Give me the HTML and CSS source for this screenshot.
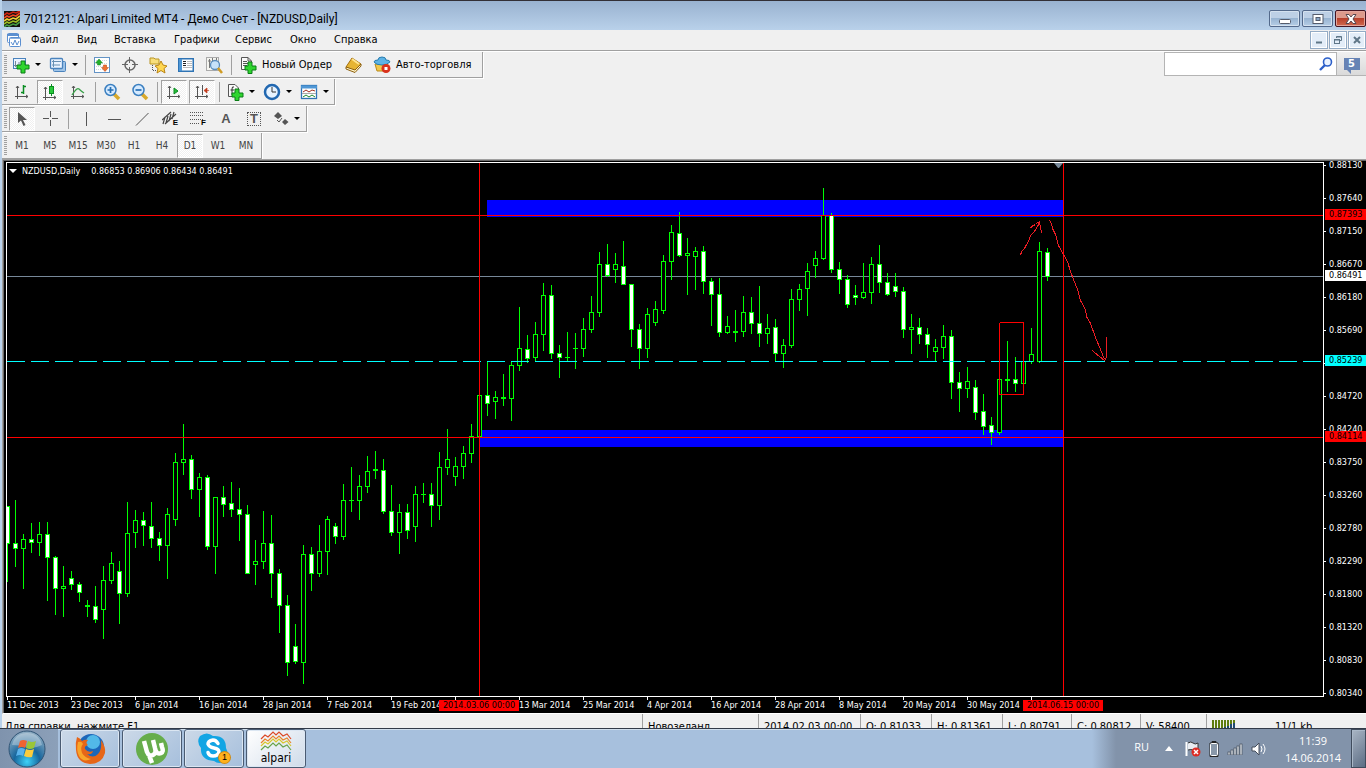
FILE: index.html
```
<!DOCTYPE html>
<html lang="ru">
<head>
<meta charset="utf-8">
<title>7012121: Alpari Limited MT4 - Демо Счет - [NZDUSD,Daily]</title>
<link rel="stylesheet" href="styles.css">
</head>
<body>
<main class="window">
  <header class="titlebar">
    <svg class="app-icon" width="16" height="16" viewBox="0 0 16 16"><rect width="16" height="16" fill="#111"/><g fill="none" stroke-width="1.6"><path d="M0 4L3 2L5 3L9 1L12 2L16 0" stroke="#c21"/><path d="M0 7L3 5L5 6L9 4L12 5L16 2" stroke="#e42"/><path d="M0 10L3 8L5 9L9 7L12 8L16 5" stroke="#ec3"/><path d="M0 13L3 11L5 12L9 10L12 11L16 8" stroke="#9b2"/><path d="M0 16L3 14L5 15L9 13L12 14L16 11" stroke="#494"/></g></svg>
    <h1 class="title">7012121: Alpari Limited MT4 - Демо Счет - [NZDUSD,Daily]</h1>
    <div class="win-buttons">
      <button class="win-btn" aria-label="Свернуть"><svg width="12" height="12" viewBox="0 0 12 12"><rect x=".5" y="6.500" width="11" height="4" rx="1" fill="#fff" stroke="#555c6c"/></svg></button>
      <button class="win-btn" aria-label="Развернуть"><svg width="12" height="12" viewBox="0 0 12 12"><rect x="1" y="1.500" width="10" height="9" fill="#fff" stroke="#555c6c"/><rect x="4" y="4.500" width="4" height="3" fill="#8aa7c8" stroke="#555c6c"/></svg></button>
      <button class="win-btn close" aria-label="Закрыть"><svg width="12" height="12" viewBox="0 0 12 12"><path d="M1 1.500H4L6 4L8 1.500H11L8 6L11 10.500H8L6 8L4 10.500H1L4 6Z" fill="#fff" stroke="#574850"/></svg></button>
    </div>
  </header>

  <nav class="menubar">
    <svg class="menu-icon" width="16" height="16" viewBox="0 0 16 16"><rect x="1.500" y="1.500" width="11" height="9" rx="1" fill="#fff" stroke="#5b8fd0"/><path d="M1 3H13" stroke="#5b8fd0" stroke-width="2"/><rect x="3.500" y="5.500" width="11" height="9" rx="1" fill="#fff" stroke="#5b8fd0"/><path d="M3 6.500H15" stroke="#8ab0e0"/><path d="M5 10L7 13L9 8L11 13L13 9" fill="none" stroke="#5b8fd0"/></svg>
    <button class="menu m1">Файл</button><button class="menu m2">Вид</button><button class="menu m3">Вставка</button><button class="menu m4">Графики</button><button class="menu m5">Сервис</button><button class="menu m6">Окно</button><button class="menu m7">Справка</button>
    <div class="mdi-buttons">
      <button class="mdi-btn" aria-label="Свернуть окно"><svg width="8" height="8" viewBox="0 0 8 8"><path d="M1 6.500H7" stroke="#5f7687" stroke-width="2"/></svg></button>
      <button class="mdi-btn" aria-label="Восстановить окно"><svg width="8" height="8" viewBox="0 0 8 8"><path d="M2.500 2V.5H7.500V4.500H6M2.500 1H7.500" fill="none" stroke="#5f7687"/><rect x=".5" y="3.500" width="5" height="4" fill="#e3edf8" stroke="#5f7687"/><path d="M0 4H6" stroke="#5f7687"/></svg></button>
      <button class="mdi-btn" aria-label="Закрыть окно"><svg width="8" height="8" viewBox="0 0 8 8"><path d="M1 1L7 7M7 1L1 7" stroke="#5f7687" stroke-width="2"/></svg></button>
    </div>
  </nav>

  <div class="toolbars">
    <div class="toolbar-row">
      <div class="toolbar" role="toolbar" aria-label="Стандартная">
        <span class="grip"></span>
        <button class="tool drop" aria-label="Новый график"><svg width="18" height="18" viewBox="0 0 18 18"><rect x="1.500" y="2.500" width="12" height="10" fill="#eaf3ff" stroke="#4a83bd"/><path d="M3.500 5V11M2 9.500H10M7 6V9" stroke="#789" fill="none"/><path d="M9 5H13V9H17V13H13V17H9V13H5V9H9Z" fill="#2fd52f" stroke="#0a7d16"/></svg></button>
        <button class="tool drop" aria-label="Профили"><svg width="18" height="18" viewBox="0 0 18 18"><rect x="4.500" y="5.500" width="12" height="10" rx="1" fill="#9fc4e8" stroke="#4a83bd"/><rect x="1.500" y="2.500" width="12" height="10" rx="1" fill="#eaf3ff" stroke="#4a83bd" stroke-width="1.300"/><path d="M4.500 4V11M3 5.500H12M11 9H3" stroke="#6790b4"/></svg></button>
        <span class="sep"></span>
        <button class="tool" aria-label="Обзор рынка"><svg width="16" height="16" viewBox="0 0 16 16"><rect x=".5" y=".5" width="15" height="15" fill="#fff" stroke="#6494c6"/><path d="M2 3.500H14M2 6.500H14M2 9.500H14M2 12.500H14" stroke="#ccd6e0" stroke-dasharray="1 1"/><path d="M5 2L8.500 6H6.500V8H3.500V6H1.500Z" fill="#22b02b" stroke="#118021" stroke-width=".5"/><path d="M11 14.500L14.500 10.500H12.500V8H9.500V10.500H7.500Z" fill="#f07030" stroke="#b04010" stroke-width=".5"/></svg></button>
        <button class="tool" aria-label="Окно данных"><svg width="16" height="16" viewBox="0 0 16 16"><circle cx="8" cy="8" r="5" fill="none" stroke="#666" stroke-width="1.500"/><path d="M7.500 0V6M7.500 10V16M0 7.500H6M10 7.500H16" stroke="#666"/></svg></button>
        <button class="tool" aria-label="Навигатор"><svg width="18" height="18" viewBox="0 0 18 18"><path d="M1 2H5L6 3H10V8H1Z" fill="#f8df7c" stroke="#b99524"/><path d="M3.500 9V14.500H8" fill="none" stroke="#555" stroke-dasharray="1 1"/><path d="M12 5L14 9L18 10L15 12.500L16 17L12 14.500L8 17L9 12.500L6 10L10 9Z" fill="#ffd751" stroke="#ba8413"/></svg></button>
        <button class="tool" aria-label="Терминал"><svg width="16" height="14" viewBox="0 0 16 14"><rect x=".75" y=".75" width="14.500" height="12.500" fill="#fff" stroke="#2f74b5" stroke-width="1.500"/><rect x="1" y="1" width="3" height="12" fill="#4f97d5"/><path d="M5 3.500H8M5 5.500H8M5 7.500H8" stroke="#222"/><path d="M9 3.500H14M9 5.500H14M9 7.500H14M5 9.500H14" stroke="#bbb"/></svg></button>
        <button class="tool" aria-label="Тестер стратегий"><svg width="18" height="18" viewBox="0 0 18 18"><rect x="1.500" y="1.500" width="12" height="13" fill="#f5f5f0" stroke="#aaa"/><path d="M4.500 3V12M7.500 2V6M11.500 2V7M3 5H6" stroke="#777"/><circle cx="10" cy="9" r="4.500" fill="#c7e2fa" stroke="#5b8dbd" stroke-width="1.300"/><path d="M13 12L17 17" stroke="#d09b22" stroke-width="2.500"/></svg></button>
        <span class="sep"></span>
        <button class="tool text"><svg width="18" height="18" viewBox="0 0 18 18"><path d="M2.500 1.500H9L12.500 5V13.500H2.500Z" fill="#fafafa" stroke="#555"/><path d="M4 5.500H8M4 7.500H10M4 9.500H8M9 1.500V5H12" stroke="#555" fill="none"/><path d="M9 6H13V10H17V14H13V17.500H9V14H6V10H9Z" fill="#2fd52f" stroke="#0a7d16"/></svg>Новый Ордер</button>
        <button class="tool" aria-label="MetaEditor"><svg width="18" height="16" viewBox="0 0 18 16"><path d="M1 10L7 1L16 7L10 14Z" fill="#e6b433" stroke="#a36e0c"/><path d="M1 10V12L10 15.500L16 9V7L10 13Z" fill="#fff3c6" stroke="#8d600f"/><path d="M7 2L14 7" stroke="#ffe48e" stroke-width="2"/></svg></button>
        <button class="tool text last"><svg width="18" height="18" viewBox="0 0 18 18"><path d="M2 8L4 15L12 15L15 8Z" fill="#f1c84a" stroke="#ba8a1a"/><path d="M1 6Q1 4 5 4Q5 1 9 1Q13 1 13 4Q17 4 17 6Q14 9 9 9Q3 9 1 6Z" fill="#5db3e5" stroke="#287cae"/><circle cx="13" cy="12.500" r="4.500" fill="#d9321c"/><rect x="11.500" y="11" width="3" height="3" fill="#fff"/></svg>Авто-торговля</button>
      </div>
      <div class="search">
        <input class="search-input" type="search" aria-label="Поиск">
        <svg class="search-icon" width="14" height="14" viewBox="0 0 14 14"><circle cx="8.500" cy="5" r="4" fill="#eaf3ff" stroke="#2c5fc9" stroke-width="1.600"/><path d="M6 8L1 13" stroke="#2c5fc9" stroke-width="2.400"/></svg>
        <button class="chat"><span class="bubble">5</span></button>
      </div>
    </div>

    <div class="toolbar" role="toolbar" aria-label="Графики">
      <span class="grip"></span>
      <button class="tool" aria-label="Бары"><svg width="14" height="14" viewBox="0 0 14 14"><path d="M2.500 1V14M0 11.500H13M1 3L2.500 1L4 3M11 10L13 11.500L11 13" fill="none" stroke="#555"/><path d="M8.500 0V9M8.500 1.500H11M6 7.500H8.500" fill="none" stroke="#0a8d22" stroke-width="1.500"/></svg></button>
      <button class="tool pressed" aria-label="Свечи"><svg width="14" height="16" viewBox="0 0 14 16"><path d="M2.500 3V16M0 13.500H13M1 5L2.500 3L4 5M11 12L13 13.500L11 15" fill="none" stroke="#555"/><path d="M8.500 0V12" stroke="#0a8d22"/><rect x="6.500" y="2.500" width="4" height="7" fill="#28c83a" stroke="#0a8d22"/></svg></button>
      <button class="tool" aria-label="Линия"><svg width="14" height="14" viewBox="0 0 14 14"><path d="M2.500 1V14M0 11.500H13M1 3L2.500 1L4 3M11 10L13 11.500L11 13" fill="none" stroke="#555"/><path d="M1 10Q6 2 8 4T13 8" fill="none" stroke="#3aa14a" stroke-width="1.300"/></svg></button>
      <span class="sep"></span>
      <button class="tool" aria-label="Увеличить"><svg width="18" height="18" viewBox="0 0 18 18"><path d="M11 11L16 16" stroke="#d8a92c" stroke-width="3.500"/><circle cx="7.500" cy="7" r="5.500" fill="#d5eaff" stroke="#3a7fc0" stroke-width="1.500"/><path d="M4.500 7H10.500M7.500 4V10" stroke="#2670b5" stroke-width="1.700"/></svg></button>
      <button class="tool" aria-label="Уменьшить"><svg width="18" height="18" viewBox="0 0 18 18"><path d="M11 11L16 16" stroke="#d8a92c" stroke-width="3.500"/><circle cx="7.500" cy="7" r="5.500" fill="#d5eaff" stroke="#3a7fc0" stroke-width="1.500"/><path d="M4.500 7H10.500" stroke="#2670b5" stroke-width="1.700"/></svg></button>
      <span class="sep"></span>
      <button class="tool pressed" aria-label="Автопрокрутка"><svg width="14" height="14" viewBox="0 0 14 14"><path d="M2.500 1V14M0 11.500H13M1 3L2.500 1L4 3M11 10L13 11.500L11 13" fill="none" stroke="#555"/><path d="M7 3L11 6L7 9Z" fill="#29bd39" stroke="#0a8d22"/></svg></button>
      <button class="tool pressed" aria-label="Сдвиг графика"><svg width="14" height="14" viewBox="0 0 14 14"><path d="M2.500 1V14M0 11.500H13M1 3L2.500 1L4 3M11 10L13 11.500L11 13M7.500 0V10" fill="none" stroke="#555"/><path d="M9 5.500L12 3V8ZM12 5.500H14" fill="#c33b1b" stroke="#c33b1b" stroke-width=".7"/></svg></button>
      <span class="sep"></span>
      <button class="tool drop" aria-label="Индикаторы"><svg width="18" height="18" viewBox="0 0 18 18"><path d="M2.500 1.500H9L12.500 5V13.500H2.500Z" fill="#fafafa" stroke="#555"/><path d="M8 4Q6 3 6 6V12M4.500 7H8" stroke="#333" fill="none"/><path d="M9 6H13V10H17V14H13V17.500H9V14H6V10H9Z" fill="#2fd52f" stroke="#0a7d16"/></svg></button>
      <button class="tool drop" aria-label="Периоды"><svg width="18" height="18" viewBox="0 0 18 18"><circle cx="9" cy="9" r="7" fill="#e7f3ff" stroke="#2167b0" stroke-width="2.500"/><path d="M9 4V9H13" fill="none" stroke="#333"/></svg></button>
      <button class="tool drop" aria-label="Шаблоны"><svg width="18" height="16" viewBox="0 0 18 16"><rect x="1.500" y="1.500" width="15" height="13" fill="#fff" stroke="#2f74b5" stroke-width="1.300"/><path d="M1 3H17" stroke="#4f97d5" stroke-width="3"/><path d="M3 8L6 6L9 8L12 6L15 7" fill="none" stroke="#a03020"/><path d="M2 9.500H16" stroke="#aaa"/><path d="M3 13L6 11L9 13L12 11L15 13" fill="none" stroke="#1d8b2c"/></svg></button>
    </div>

    <div class="toolbar" role="toolbar" aria-label="Графические инструменты">
      <span class="grip"></span>
      <button class="tool pressed" aria-label="Курсор"><svg width="10" height="16" viewBox="0 0 10 16"><path d="M1 1V12L4 9.500L6.500 15L8.500 14L6 9H10Z" fill="#555"/></svg></button>
      <button class="tool" aria-label="Перекрестие"><svg width="15" height="15" viewBox="0 0 15 15"><path d="M7.500 0V6M7.500 9V15M0 7.500H6M9 7.500H15" stroke="#555"/></svg></button>
      <span class="sep wide"></span>
      <button class="tool" aria-label="Вертикальная линия"><svg width="14" height="14" viewBox="0 0 14 14"><path d="M7.500 0V14" stroke="#555"/></svg></button>
      <button class="tool" aria-label="Горизонтальная линия"><svg width="14" height="14" viewBox="0 0 14 14"><path d="M1 7.500H14" stroke="#555"/></svg></button>
      <button class="tool" aria-label="Трендовая линия"><svg width="14" height="14" viewBox="0 0 14 14"><path d="M1 13.500L13.500 1" stroke="#555"/></svg></button>
      <button class="tool mark" aria-label="Канал"><svg width="15" height="16" viewBox="0 0 15 16"><path d="M0 9L9 1M3 13L14 3M3 6L1 13M6 5L4 12M9 3L7 10M12 1L10 8" fill="none" stroke="#444" stroke-width="1.200"/></svg><small>E</small></button>
      <button class="tool mark" aria-label="Фибоначчи"><svg width="15" height="16" viewBox="0 0 15 16"><path d="M0 1.500H14M0 4.500H14M0 8.500H14M0 12.500H9" stroke="#555" stroke-dasharray="1 1"/></svg><small>F</small></button>
      <button class="tool letter">A</button>
      <button class="tool letter"><span class="textbox">T</span></button>
      <button class="tool drop" aria-label="Стрелки"><svg width="15" height="14" viewBox="0 0 15 14"><path d="M4 0L8 4L4 7L0 4ZM11 7L14.500 10L11 13L8 10Z" fill="#555"/><path d="M3 8L5 10L8 6" fill="none" stroke="#555"/></svg></button>
    </div>

    <div class="toolbar periods" role="toolbar" aria-label="Период">
      <span class="grip"></span>
      <button class="tool">M1</button><button class="tool">M5</button><button class="tool">M15</button><button class="tool">M30</button><button class="tool">H1</button><button class="tool">H4</button><button class="tool pressed">D1</button><button class="tool">W1</button><button class="tool">MN</button>
    </div>
  </div>

  <section class="chart" aria-label="NZDUSD, Daily">
    <div class="plot">
      <svg class="plot-svg" id="plot" width="100%" height="100%"></svg>
      <p class="quote"><i class="quote-arrow"></i><span class="symbol">NZDUSD,Daily</span><span>0.86853 0.86906 0.86434 0.86491</span></p>
    </div>
    <div class="prices">
      <ul class="price-list"><li>0.88130</li><li>0.87640</li><li>0.87150</li><li>0.86670</li><li>0.86180</li><li>0.85690</li><li></li><li>0.84720</li><li>0.84240</li><li>0.83750</li><li>0.83260</li><li>0.82780</li><li>0.82290</li><li>0.81800</li><li>0.81320</li><li>0.80830</li><li>0.80340</li></ul>
      <span class="tag red p1">0.87393</span><span class="tag white p2">0.86491</span><span class="tag cyan p3">0.85239</span><span class="tag red p4">0.84114</span>
    </div>
    <div class="dates">
      <ul class="date-list"><li>11 Dec 2013</li><li>23 Dec 2013</li><li>6 Jan 2014</li><li>16 Jan 2014</li><li>28 Jan 2014</li><li>7 Feb 2014</li><li>19 Feb 2014</li><li></li><li>13 Mar 2014</li><li>25 Mar 2014</li><li>4 Apr 2014</li><li>16 Apr 2014</li><li>28 Apr 2014</li><li>8 May 2014</li><li>20 May 2014</li><li>30 May 2014</li><li></li></ul>
      <span class="tag red d1">2014.03.06 00:00</span><span class="tag red d2">2014.06.15 00:00</span>
    </div>
  </section>

  <footer class="status">
    <span class="cell help">Для справки, нажмите F1</span><span class="cell c1">Новозеланд</span><span class="cell c2">2014.02.03 00:00</span><span class="cell c3">O: 0.81033</span><span class="cell c3">H: 0.81361</span><span class="cell c4">L: 0.80791</span><span class="cell c4">C: 0.80812</span><span class="cell c5">V: 58400</span>
    <span class="cell c6"><svg width="24" height="12" viewBox="0 0 24 12"><path d="M1 0V12M4 0V12M7 0V12M10 0V12M13 0V7M16 0V6M19 0V4M22 0V3" stroke="#5f7d10" stroke-width="2"/><path d="M13 7V12M16 6V12M19 4V12M22 3V12" stroke="#204a70" stroke-width="2"/></svg><span>11/1 kb</span></span>
  </footer>
</main>

<nav class="taskbar">
  <button class="start" aria-label="Пуск"><svg width="38" height="38" viewBox="0 0 38 38"><defs><radialGradient id="orb" cx=".5" cy=".85" r=".8"><stop offset="0" stop-color="#3fd2f8"/><stop offset=".45" stop-color="#17669d"/><stop offset="1" stop-color="#8cabc2"/></radialGradient></defs><circle cx="19" cy="19" r="18" fill="url(#orb)" stroke="#305475"/><path d="M4 15Q7 3 19 3T34 15Q26 19 19 17T4 15" fill="#fff" opacity=".3"/><path d="M12 11Q15 9 19 11L17 18Q14 16 10 18Z" fill="#ef6332"/><path d="M20 11Q24 13 28 11L26 18Q22 20 18 18Z" fill="#9ac638"/><path d="M10 19Q13 17 17 19L15 26Q12 24 8 26Z" fill="#5ab2eb"/><path d="M18 19Q22 21 26 19L24 27Q20 28 16 26Z" fill="#fccc3c"/></svg></button>
  <button class="task" aria-label="Firefox"><svg width="32" height="32" viewBox="0 0 32 32"><circle cx="17" cy="14" r="13" fill="#1c67ba"/><circle cx="19" cy="9" r="7" fill="#52b9e8"/><path d="M3 4Q6 5 8 8Q11 6 14 7Q11 10 14 12Q10 13 11 16Q14 20 19 18Q18 22 13 21Q19 26 24 21Q28 17 27 7Q32 14 31 20Q28 31 16 31Q3 30 2 17Q1 10 3 4Z" fill="#e66618"/><path d="M4 9Q8 8 9 11Q6 14 8 20Q11 25 17 26Q9 30 5 23Q2 17 4 9" fill="#f8a52a"/></svg></button>
  <button class="task" aria-label="µTorrent"><svg width="34" height="34" viewBox="0 0 34 34"><circle cx="17" cy="17" r="16" fill="#66ad4b"/><path d="M9 9L12 20Q14 25 18 23Q22 21 20 16L18 8M20 17Q22 23 26 21Q29 20 27 15L26 11M14 23L17 31" fill="none" stroke="#fff" stroke-width="4.500"/></svg></button>
  <button class="task skype" aria-label="Skype"><svg width="32" height="32" viewBox="0 0 32 32"><path d="M2 3Q9-2 15 3Q28 2 28 15Q32 23 27 28Q21 32 16 28Q2 27 3 15Q-2 9 2 3" fill="#12a5e4"/><path d="M20 10.500Q18 7 15 7Q10 8 10 11Q11 14 16 15Q21 16 21 19Q20 23 15 23Q11 23 10 19.500" fill="none" stroke="#fff" stroke-width="3.500" stroke-linecap="round"/></svg><span class="badge">1</span></button>
  <button class="task alpari"><svg width="32" height="20" viewBox="0 0 32 20"><g fill="none" stroke-width="1.200"><path d="M1 8L5 4L8 6L13 1L16 4L19 1L23 5L27 3L31 8" stroke="#dc4926"/><path d="M1 12L5 8L8 10L13 5L16 8L19 5L23 9L27 7L31 12" stroke="#e8852b"/><path d="M1 15L5 11L8 13L13 8L16 11L19 8L23 12L27 10L31 15" stroke="#d8c62b"/><path d="M1 19L5 15L8 17L13 12L16 15L19 12L23 16L27 14L31 19" stroke="#68a34a"/></g></svg>alpari</button>
  <div class="tray">
    <span class="lang">RU</span>
    <svg width="8" height="5" viewBox="0 0 8 5"><path d="M4 0L8 5H0Z" fill="#fff"/></svg>
    <svg width="16" height="16" viewBox="0 0 16 16"><path d="M1.500 1V15" stroke="#fff" stroke-width="2"/><path d="M3 2Q6 0 8 2T13 2V9Q10 10 8 9T3 9" fill="#e8ecf1" stroke="#333"/><circle cx="11" cy="11" r="4.500" fill="#dd2c24"/><path d="M9 9L13 13M13 9L9 13" stroke="#fff" stroke-width="1.500"/></svg>
    <svg width="10" height="16" viewBox="0 0 10 16"><path d="M3 2V.5H7V2H9V15.500H1V2Z" fill="#222" stroke="#222"/><rect x="1.500" y="2.500" width="7" height="12" rx="1" fill="#8998a9" stroke="#fff"/></svg>
    <svg width="16" height="12" viewBox="0 0 16 12"><g fill="#e4e9ef" stroke="#444d5a" stroke-width=".7"><rect x="1" y="9" width="2" height="3"/><rect x="4" y="7" width="2" height="5"/><rect x="7" y="5" width="2" height="7"/><rect x="10" y="3" width="2" height="9"/><rect x="13" y="1" width="2" height="11"/></g></svg>
    <svg width="16" height="14" viewBox="0 0 16 14"><path d="M1 5H4L8 1V13L4 9H1Z" fill="#fff" stroke="#444d5a"/><path d="M10 4Q12 7 10 10M12 2Q16 7 12 12" fill="none" stroke="#fff"/></svg>
    <div class="clock"><time>11:39</time><time>14.06.2014</time></div>
    <button class="desktop" aria-label="Показать рабочий стол"></button>
  </div>
</nav>
<script src="chart.js"></script>
</body>
</html>
```
FILE: styles.css
```
* { box-sizing: border-box; }
body {
  margin: 0;
  height: 100vh;
  display: flex;
  flex-direction: column;
  overflow: hidden;
  background: #f0f0f0;
  font: 11px/16px "DejaVu Sans Condensed", "Liberation Sans", sans-serif;
  color: #000;
}
button {
  border: 0;
  padding: 0;
  margin: 0;
  background: none;
  font: inherit;
  color: inherit;
}
ul { list-style: none; margin: 0; padding: 0; }
svg { display: block; flex: none; }

.window {
  flex: 1;
  min-height: 0;
  display: flex;
  flex-direction: column;
  border-left: 2px solid #b9d1ea;
  overflow: hidden;
}
.titlebar {
  flex: none;
  display: flex;
  align-items: center;
  height: 30px;
  margin-left: -2px;
  padding: 8px 0 2px 4px;
  gap: 4px;
  border-top: 1px solid #322f36;
  background: linear-gradient(#99b2d0, #b9d1ea);
}
.title {
  margin: 0;
  font: 12px/16px Roboto, sans-serif;
  white-space: nowrap;
}
.win-buttons { display: flex; gap: 2px; margin-left: auto; }
.win-btn {
  display: flex;
  align-items: center;
  justify-content: center;
  width: 31px;
  height: 17px;
  border: 1px solid #53698b;
  border-radius: 2px;
  box-shadow: inset 0 0 0 1px #d4e1ef;
  background: linear-gradient(#bdd0e6 50%, #98b4d2 50%, #b6cee6);
}
.win-btn.close {
  border-color: #431422;
  box-shadow: inset 0 0 0 1px #e2a59c;
  background: linear-gradient(#dd9a8c 50%, #b8402c 50%, #d06a50);
}

.menubar {
  flex: none;
  display: flex;
  align-items: center;
  height: 21px;
  padding-left: 4px;
  border-bottom: 1px solid #a0a0a0;
}
.menu-icon { margin-right: 6px; }
.menu { text-align: left; white-space: nowrap; line-height: 18px; }
.m1 { margin-left: 3px; width: 46px; }
.m2 { width: 37px; }
.m3 { width: 60px; }
.m4 { width: 61px; }
.m5 { width: 55px; }
.m6 { width: 44px; }
.mdi-buttons { display: flex; gap: 1px; margin-left: auto; }
.mdi-btn {
  display: flex;
  align-items: center;
  justify-content: center;
  width: 18px;
  height: 18px;
  border: 1px solid #93abc5;
  box-shadow: inset 0 0 0 1px #fff;
  background: #e3edf8;
}

.toolbars {
  flex: none;
  display: flex;
  flex-direction: column;
  align-items: flex-start;
  gap: 1px;
  border-top: 1px solid #fff;
}
.toolbar-row { display: flex; width: 100%; justify-content: space-between; }
.toolbar {
  display: flex;
  align-items: center;
  height: 26px;
  padding-right: 1px;
  border-right: 1px solid #a0a0a0;
  border-bottom: 1px solid #a0a0a0;
  box-shadow: 1px 1px #fff;
}
.grip {
  width: 3px;
  height: 19px;
  margin: 0 1px 0 2px;
  background: repeating-linear-gradient(#a0a0a0 0 1px, #f0f0f0 1px 2px);
}
.tool {
  display: flex;
  align-items: center;
  justify-content: center;
  width: 28px;
  height: 24px;
}
.tool.drop { width: 37px; gap: 5px; }
.tool.drop::after {
  content: "";
  border: 3px solid transparent;
  border-top-color: #000;
  border-bottom: 0;
}
.tool.text {
  width: auto;
  padding: 0 8px 0 5px;
  gap: 5px;
  white-space: nowrap;
}
.tool.text.last { padding-right: 10px; }
.tool.pressed {
  width: 26px;
  margin: 0 1px;
  border: 1px solid #a0a0a0;
  border-right-color: #fff;
  border-bottom-color: #fff;
  background: repeating-conic-gradient(#fff 0 25%, #f0f0f0 0 50%) 0 0 / 2px 2px;
}
.tool.mark small { margin: 8px 0 0 -4px; font: 700 8px/8px "Liberation Sans", sans-serif; }
.tool.letter { font: 700 13px/14px "Liberation Sans", sans-serif; color: #555; }
.textbox { width: 14px; border: 1px dotted #555; line-height: 12px; }
.sep { width: 1px; height: 20px; margin: 0 2px 0 3px; background: #a0a0a0; }
.sep.wide { margin: 0 3px 0 4px; }
.periods { color: #444; font-size: 10px; }

.search { display: flex; align-items: center; height: 24px; }
.search-input {
  width: 173px;
  height: 24px;
  padding: 0 24px 0 4px;
  border: 1px solid #b4b4b4;
  background: #fff;
  font: inherit;
}
.search-icon { margin: 0 4px 0 -18px; }
.chat {
  display: flex;
  align-items: center;
  justify-content: center;
  width: 29px;
  height: 24px;
  border-bottom: 1px solid #b4b4b4;
  background: linear-gradient(#f0f0f0, #dadada);
}
.bubble {
  position: relative;
  width: 16px;
  height: 12px;
  background: #6683b5;
  color: #fff;
  font: 700 11px/12px "DejaVu Sans Condensed", sans-serif;
  text-align: center;
}
.bubble::after {
  content: "";
  position: absolute;
  left: 3px;
  top: 12px;
  border: 2px solid transparent;
  border-top-color: #6683b5;
  border-right-color: #6683b5;
}

.chart {
  flex: 1;
  min-height: 0;
  display: grid;
  grid-template-columns: 1fr 42px;
  grid-template-rows: minmax(0, 1fr) 16px;
  border-top: 1px solid #a0a0a0;
  border-left: 1px solid #a0a0a0;
  border-bottom: 1px solid #fff;
  box-shadow: inset 1px 1px #696969;
  padding: 2px 0 0 3px;
  background: #000;
  color: #fff;
  font: 9px/10px "DejaVu Sans Condensed", "Liberation Sans", sans-serif;
}
.plot {
  position: relative;
  border: 1px solid #fff;
  overflow: hidden;
}
.plot-svg { position: absolute; inset: 0; }
.quote {
  position: absolute;
  left: 2px;
  top: 3px;
  display: flex;
  align-items: center;
  gap: 5px;
  margin: 0;
}
.quote-arrow { border: 4px solid transparent; border-top-color: #fff; border-bottom: 0; }
.symbol { margin-right: 6px; }
.prices { position: relative; min-height: 0; }
.price-list { margin-top: -2px; }
.price-list li { display: flex; gap: 3px; height: 33px; }
.price-list li:last-child { height: 10px; }
.price-list li::before { content: ""; width: 2px; height: 1px; margin-top: 5px; background: #fff; }
.tag {
  position: absolute;
  height: 11px;
  line-height: 11px;
  white-space: nowrap;
}
.tag.red { background: #f00; color: #000; }
.tag.white { background: #fff; color: #000; }
.tag.cyan { background: #0ff; color: #000; }
.prices .tag { left: 1px; right: 0; padding-left: 4px; }
.p1 { top: 47px; }
.p2 { top: 108px; }
.p3 { top: 193px; }
.p4 { top: 269px; }
.dates { position: relative; grid-column: 1 / -1; }
.date-list { display: flex; padding-left: 1px; }
.date-list li { flex: none; width: 64px; white-space: nowrap; }
.date-list li::before { content: ""; display: block; width: 1px; height: 3px; background: #fff; }
.dates .tag { top: 3px; width: 80px; text-align: center; }
.d1 { left: 433px; }
.d2 { left: 1017px; }

.status { flex: none; display: flex; height: 14px; line-height: 26px; overflow: hidden; }
.cell { flex: none; height: 26px; padding-left: 5px; border-left: 1px solid #a0a0a0; white-space: nowrap; overflow: hidden; }
.cell.help { flex: 1; border-left: 0; padding-left: 3px; }
.c1 { width: 116px; }
.c2 { width: 102px; }
.c3 { width: 71px; }
.c4 { width: 69px; }
.c5 { width: 66px; }
.c6 { width: 160px; display: flex; gap: 39px; }
.c6 svg { margin-top: 6px; }

.taskbar {
  flex: none;
  display: flex;
  gap: 2px;
  height: 40px;
  border-top: 1px solid #323a48;
  box-shadow: inset 0 1px #d0deec;
  background: #a7c0dd;
}
.start { width: 58px; padding: 0 0 0 8px; background: linear-gradient(90deg, #7f93ad, #8ca0b9); }
.task {
  position: relative;
  display: flex;
  flex-direction: column;
  align-items: center;
  justify-content: center;
  width: 60px;
  border: 1px solid #4a5b72;
  border-radius: 3px;
  box-shadow: inset 0 0 0 1px #dbe6f2;
  background: linear-gradient(135deg, #ccd9e8, #a6bfdc);
}
.task.alpari { background: linear-gradient(135deg, #fff, #cfdbe9); font-size: 12px; line-height: 15px; }
.badge {
  position: absolute;
  right: 13px;
  bottom: 4px;
  width: 11px;
  height: 11px;
  border-radius: 50%;
  background: #ffb11c;
  box-shadow: 0 0 0 1px #d08a10;
  font: 9px/11px "Liberation Sans", sans-serif;
}
.tray {
  display: flex;
  align-items: center;
  margin-left: auto;
  padding-left: 42px;
  gap: 8px;
  background: linear-gradient(90deg, #a7c0dd, #8293aa 24px);
  color: #fff;
  font: 11px/17px "Open Sans", sans-serif;
}
.lang { margin-right: 8px; padding-bottom: 4px; }
.tray > svg:nth-of-type(1) { margin-right: 4px; }
.clock {
  display: flex;
  flex-direction: column;
  align-items: center;
  width: 60px;
  margin-left: 8px;
}
.desktop {
  align-self: stretch;
  width: 15px;
  border: 1px solid #404c5d;
  box-shadow: inset 1px 1px #aab8c8;
  background: linear-gradient(135deg, #a9b5c4, #5d6e85);
}
```
FILE: chart.js
```
const NS = "http://www.w3.org/2000/svg";
const plot = document.getElementById("plot");
const LEFT = 7;
const TOP = 163;

// high, body top, body bottom, low, falling
const candles = [
  [506,506,544,582,1],[500,543,549,567,1],[534,539,549,589,0],[523,539,543,553,1],[522,534,543,556,0],
  [522,534,558,601,1],[556,557,589,615,1],[566,586,589,617,0],[571,578,585,590,1],[582,584,593,602,1],
  [600,605,607,617,0],[586,606,620,623,1],[566,580,610,639,0],[552,563,581,584,0],[561,571,594,624,1],
  [502,533,594,597,0],[510,520,533,548,0],[512,520,526,546,1],[502,526,539,548,1],[532,538,546,561,1],
  [508,514,546,579,0],[453,462,520,526,0],[424,459,463,475,0],[455,459,490,499,1],[473,477,490,517,0],
  [475,477,547,550,1],[497,497,547,574,0],[486,497,505,517,1],[482,503,510,517,1],[488,509,515,541,1],
  [505,514,574,574,1],[540,561,565,585,0],[511,543,562,569,0],[515,543,574,598,1],[569,573,606,633,1],
  [595,605,663,676,1],[624,646,662,664,1],[545,554,663,684,0],[547,554,574,591,1],[525,551,574,577,0],
  [516,519,552,575,0],[523,526,537,544,1],[484,500,537,540,0],[467,500,501,512,0],[475,486,501,520,0],
  [456,471,487,493,0],[451,469,471,479,0],[459,470,512,514,1],[485,511,533,536,1],[504,512,533,554,0],
  [504,512,531,539,1],[486,494,527,542,0],[483,494,495,503,0],[483,494,506,527,1],[452,467,506,520,0],
  [429,459,468,475,0],[457,466,477,486,0],[446,453,467,479,0],[424,436,454,463,0],[395,395,437,437,0],
  [361,395,404,416,1],[391,397,402,419,0],[374,397,399,406,0],[361,365,399,421,0],[307,348,366,371,0],
  [335,349,359,363,1],[322,334,358,361,0],[283,295,335,351,0],[285,295,354,359,1],[345,353,358,378,1],
  [332,357,358,361,0],[333,348,349,369,0],[318,329,349,357,0],[296,312,330,333,0],[252,264,313,317,0],
  [244,264,276,277,1],[253,264,270,283,0],[241,266,285,285,1],[284,284,330,347,1],[324,329,349,369,1],
  [308,314,349,358,0],[301,309,323,326,0],[255,261,311,314,0],[225,232,262,280,0],[212,233,256,257,1],
  [238,253,256,295,0],[247,251,257,290,0],[246,251,282,294,1],[278,281,295,326,1],[278,294,333,337,1],
  [316,326,333,334,0],[310,331,333,342,0],[296,312,332,337,0],[297,312,324,334,1],[286,323,334,347,1],
  [314,328,334,344,0],[319,327,354,361,1],[339,345,354,368,0],[289,299,346,348,0],[284,289,300,311,0],
  [263,271,289,316,0],[251,258,266,278,0],[188,215,259,260,0],[213,215,270,273,1],[262,269,280,294,1],
  [275,279,305,308,1],[285,295,298,305,1],[263,292,298,299,0],[257,264,293,304,0],[245,264,283,293,1],
  [273,282,295,296,1],[273,286,292,297,1],[287,291,330,338,1],[314,327,330,354,0],[318,327,335,344,1],
  [328,334,345,358,1],[339,347,352,361,0],[325,336,348,359,0],[330,336,383,399,1],[372,382,389,412,1],
  [367,381,389,398,0],[380,387,413,420,1],[394,411,427,435,1],[417,425,433,445,1],[379,379,433,435,0],
  [341,379,381,392,0],[357,379,384,392,1],[361,361,384,384,0],[328,354,362,364,0],[242,251,362,363,0],
  [248,252,277,281,1]
];

function add(name, attrs) {
  const node = document.createElementNS(NS, name);
  for (const key in attrs) node.setAttribute(key, attrs[key]);
  plot.appendChild(node);
}
function box(x, y, width, height, fill) {
  add("rect", { x: x - LEFT, y: y - TOP, width, height, fill });
}
function line(y, color) {
  add("rect", { x: 0, y: y - TOP, width: "100%", height: 1, fill: color });
}
function stroke(points, color) {
  const shifted = points.map(([x, y]) => (x - LEFT + 0.5) + "," + (y - TOP + 0.5)).join(" ");
  add("polyline", { points: shifted, fill: "none", stroke: color, "shape-rendering": "crispEdges" });
}

box(487, 200, 576, 17, "#00f");
box(480, 430, 583, 17, "#00f");
line(276, "#778899");

candles.forEach(([high, top, bottom, low, falling], i) => {
  const x = LEFT + i * 8;
  box(x, high, 1, low - high, "#0f0");
  box(x - 2, top, 5, bottom - top, "#0f0");
  if (bottom - top > 2) box(x - 1, top + 1, 3, bottom - top - 2, falling ? "#fff" : "#000");
});

line(215, "#f00");
line(437, "#f00");
add("line", { x1: 0, x2: "100%", y1: 361.5 - TOP, y2: 361.5 - TOP, stroke: "#0ff", "stroke-dasharray": "18 6" });
add("rect", { x: 479 - LEFT, y: 0, width: 1, height: "100%", fill: "#f00" });
add("rect", { x: 1063 - LEFT, y: 0, width: 1, height: "100%", fill: "#f00" });
stroke([[999,322],[1023,322],[1023,394],[999,394],[999,322]], "#f00");
add("path", { d: "M1047 0H1056L1052 5H1051Z", fill: "#778899" });

const ink = "#ed1c24";
stroke([[1020,255],[1021,251],[1024,248],[1026,244],[1028,241],[1030,235],[1034,231],[1037,226],[1039,222]], ink);
stroke([[1030,228],[1031,226],[1035,224],[1037,222],[1040,221]], ink);
stroke([[1039,222],[1040,226],[1041,233]], ink);
stroke([[1049,220],[1051,223],[1052,228],[1055,234],[1058,245],[1063,254],[1067,261],[1070,271],[1073,279],[1077,289],[1080,300],[1085,309],[1086,316],[1090,323],[1095,337],[1100,349],[1104,359]], ink);
stroke([[1092,350],[1094,352],[1104,360],[1106,357],[1106,336]], ink);
```
